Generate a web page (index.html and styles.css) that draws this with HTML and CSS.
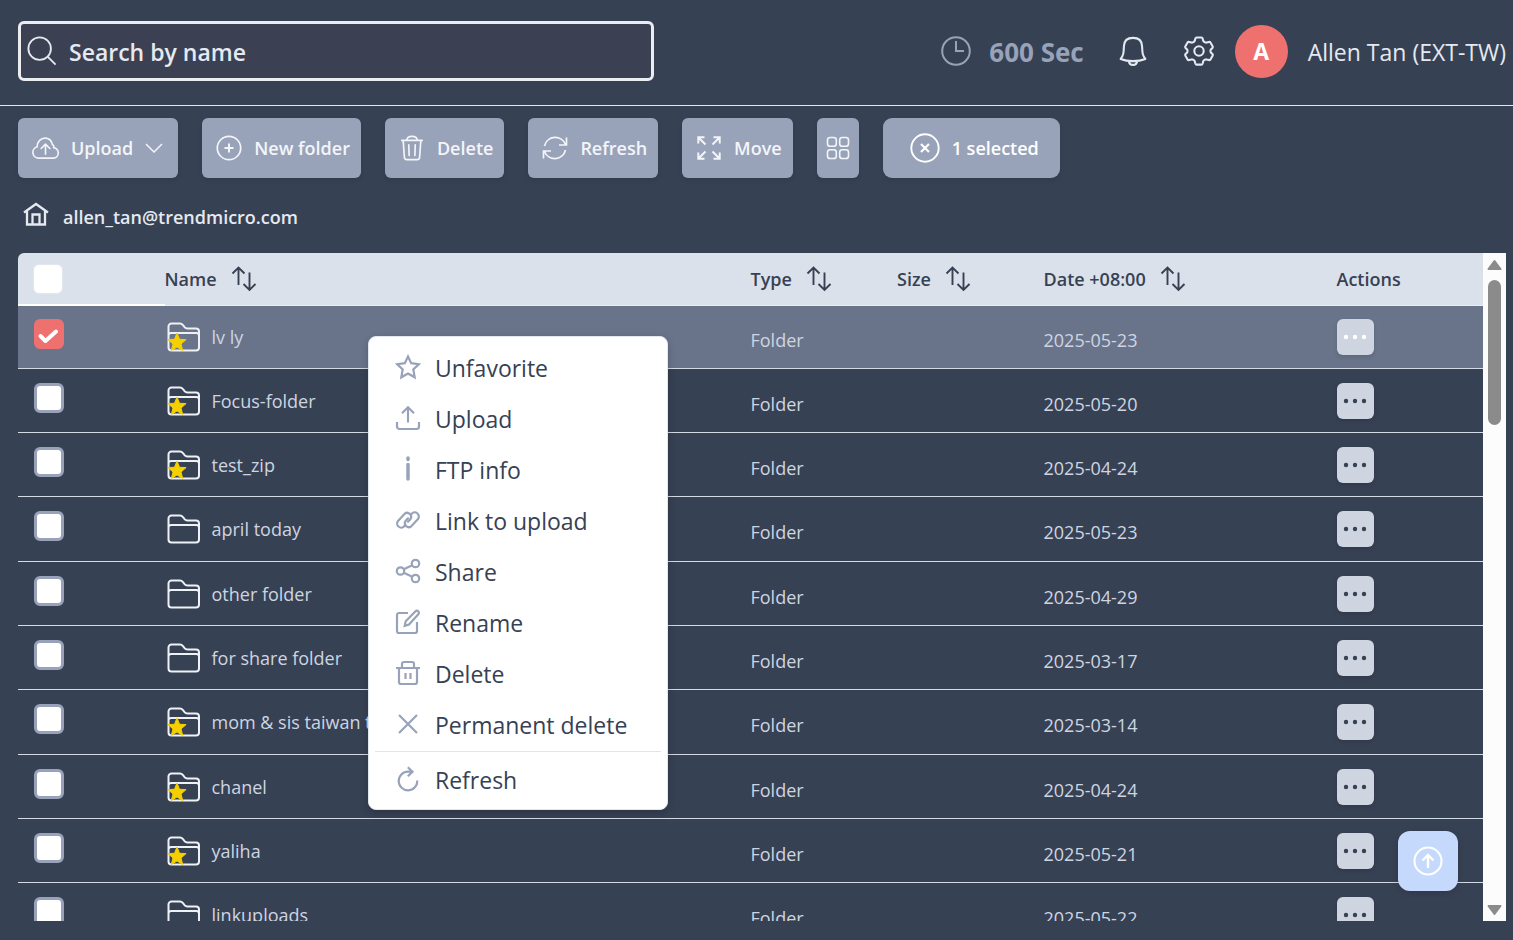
FILE: index.html
```html
<!DOCTYPE html>
<html lang="en">
<head>
<meta charset="utf-8">
<title>Files</title>
<link rel="stylesheet" href="styles.css">
</head>
<body>
<svg class="sprite" aria-hidden="true">
  <symbol id="i-folder" viewBox="0 0 34 30"><path d="M1.5 25.500V4.500a3 3 0 0 1 3-3h8.500c1.500 0 2 .5 3 1.700l1.800 2.200c.8.900 1.300 1.100 2.500 1.100H29a3 3 0 0 1 3 3v16a3 3 0 0 1-3 3H4.500a3 3 0 0 1-3-3zM1.500 13.500a2.500 2.500 0 0 1 2.500-2.500h25.500a2.500 2.500 0 0 1 2.500 2.500" fill="none" stroke="currentColor" stroke-width="2"/></symbol>
  <symbol id="i-star" viewBox="0 0 20 20"><path d="M10 1l2.500 6.300 6.600.3-5.100 4.300 1.700 6.600-5.700-3.600-5.700 3.600L6 11.900.9 7.600l6.600-.3z" fill="#f5cf00" stroke="#f5cf00" stroke-linejoin="round"/></symbol>
  <symbol id="i-sort" viewBox="0 0 26 26"><path d="M7.500 19V2M1.500 7.500l6-6 6 6M18.500 6.500v17M12.500 18l6 6 6-6" fill="none" stroke="currentColor" stroke-width="1.900"/></symbol>
  <symbol id="i-dots" viewBox="0 0 24 6"><g fill="currentColor"><circle cx="3" cy="3" r="2.200"/><circle cx="12" cy="3" r="2.200"/><circle cx="21" cy="3" r="2.200"/></g></symbol>
  <symbol id="i-check" viewBox="0 0 30 30"><path d="M6.500 17l5 5L22 12.500" fill="none" stroke="#fff" stroke-width="4" stroke-linecap="round" stroke-linejoin="round"/></symbol>
</svg>

<header class="topbar">
  <label class="search">
    <svg class="ic-search" viewBox="0 0 32 32" fill="none" stroke="currentColor" stroke-width="2"><circle cx="13.500" cy="13.500" r="12"/><path d="M22 22l8.500 8.500"/></svg>
    <input type="search" placeholder="Search by name" aria-label="Search by name">
  </label>
  <div class="account">
    <svg class="ic-clock" viewBox="0 0 30 30" fill="none" stroke="currentColor" stroke-width="2"><circle cx="15" cy="15" r="13.800"/><path d="M15 5v10h8"/></svg>
    <span class="timer">600 Sec</span>
    <button class="plain bell" aria-label="Notifications"><svg viewBox="0 0 30 32" fill="none" stroke="currentColor" stroke-width="2.200" stroke-linejoin="round"><path d="M1.800 24.500C5 20.500 5 18 5.300 11 5.500 5 9.500 2 15 2s9.500 3 9.700 9c.3 7 .3 9.500 3.500 13.500C24 26.200 20 26.800 15 26.800S6 26.200 1.800 24.500zM10.500 26.500c.2 2.700 2 4.300 4.500 4.300s4.300-1.600 4.500-4.300"/></svg></button>
    <button class="plain gear" aria-label="Settings"><svg viewBox="0 0 32 32" fill="none" stroke="currentColor" stroke-width="2.200" stroke-linejoin="round"><path d="M13.500 1.500h5c.9 0 1.200.5 1.400 1.200l.6 2.300c.2.600.5.900 1 1.200l1 .6c.6.300 1 .4 1.600.2l2.400-.7c.8-.2 1.300 0 1.700.7l2.300 4c.4.700.3 1.200-.2 1.800l-1.600 1.600c-.4.500-.5.900-.5 1.600s.1 1.100.5 1.600l1.600 1.600c.5.600.6 1.100.2 1.800l-2.300 4c-.4.700-.9.900-1.700.7l-2.400-.7c-.6-.2-1-.1-1.600.2l-1 .6c-.5.300-.8.600-1 1.200l-.6 2.300c-.2.700-.5 1.200-1.400 1.200h-5c-.9 0-1.200-.5-1.400-1.200l-.6-2.300c-.2-.6-.5-.9-1-1.200l-1-.6c-.6-.3-1-.4-1.600-.2l-2.400.7c-.8.200-1.300 0-1.700-.7l-2.300-4c-.4-.7-.3-1.200.2-1.800l1.600-1.600c.4-.5.500-.9.500-1.600s-.1-1.100-.5-1.600l-1.600-1.600c-.5-.6-.6-1.100-.2-1.800l2.300-4c.4-.7.9-.9 1.700-.7l2.400.7c.6.200 1 .1 1.600-.2l1-.6c.5-.3.800-.6 1-1.200l.6-2.300c.2-.7.500-1.200 1.400-1.200z"/><circle cx="16" cy="16" r="5"/></svg></button>
    <span class="avatar">A</span>
    <span class="user">Allen Tan (EXT-TW)</span>
  </div>
</header>

<main class="page">
  <div class="toolbar">
    <button class="tool upload"><svg class="ic27" viewBox="0 0 28 24" fill="none" stroke="currentColor" stroke-width="1.700" stroke-linecap="round" stroke-linejoin="round"><path d="M7 22.500a6 6 0 0 1-1.600-11.800C5.200 5.500 9 1.800 13.500 1.800c4 0 6.800 2.500 7.700 6.700 1.400.4 1.700 2.200 1.200 3.200 3 .5 4.800 2.800 4.800 5.400 0 3-2.200 5.400-5.200 5.400zM14 18.500V8.500M9.500 12.500L14 8l4.500 4.500"/></svg>Upload<svg class="chev" viewBox="0 0 18 10" fill="none" stroke="currentColor" stroke-width="1.500"><path d="M1 1l8 8 8-8"/></svg></button>
    <button class="tool"><svg class="ic26" viewBox="0 0 26 26" fill="none" stroke="currentColor" stroke-width="1.700"><circle cx="13" cy="13" r="11.700"/><path d="M13 8.500v9M8.500 13h9" stroke-width="2"/></svg>New folder</button>
    <button class="tool"><svg class="ic26" viewBox="0 0 26 28" fill="none" stroke="currentColor" stroke-width="1.800" stroke-linecap="round" stroke-linejoin="round"><path d="M2 5.800h22M7.500 5.500c0-2.500 1.500-4 5.500-4s5.500 1.500 5.500 4M3.500 6l1.300 18c.2 1.700 1 2.500 2.700 2.500h11c1.700 0 2.500-.8 2.700-2.500L22.500 6M9.500 10.500l.4 11.500M16.500 10.500l-.4 11.500"/></svg>Delete</button>
    <button class="tool"><svg class="ic26" viewBox="0 0 26 26" fill="none" stroke="currentColor" stroke-width="1.700"><path d="M2.500 11A11 11 0 0 1 23.500 9.500M24.500 2.500v7.500H17M23.500 15A11 11 0 0 1 2.500 16.500M1.500 23.500V16H9"/></svg>Refresh</button>
    <button class="tool"><svg class="ic26" viewBox="0 0 26 26" fill="none" stroke="currentColor" stroke-width="2"><path d="M9.500 9.500L2.500 2.500M2.300 8.500V2.300h6.200M16.500 9.500l7-7M17.500 2.300h6.200v6.200M9.500 16.500l-7 7M2.300 17.500v6.200h6.200M16.500 16.500l7 7M17.500 23.700h6.200v-6.200"/></svg>Move</button>
    <button class="tool grid-view" aria-label="Grid view"><svg class="ic24" viewBox="0 0 24 24" fill="none" stroke="currentColor" stroke-width="1.600"><rect x="1.500" y="1.500" width="8.800" height="8.800" rx="2.600"/><rect x="13.700" y="1.500" width="8.800" height="8.800" rx="2.600"/><rect x="1.500" y="13.700" width="8.800" height="8.800" rx="2.600"/><rect x="13.700" y="13.700" width="8.800" height="8.800" rx="2.600"/></svg></button>
    <button class="tool selected"><svg class="ic30" viewBox="0 0 30 30" fill="none" stroke="currentColor" stroke-width="1.900"><circle cx="15" cy="15" r="13.700"/><path d="M11 11l8 8M19 11l-8 8" stroke-width="2.200"/></svg>1 selected</button>
  </div>

  <nav class="crumbs" aria-label="Breadcrumb">
    <svg class="home" viewBox="0 0 26 24" fill="none" stroke="currentColor" stroke-width="2.300"><path d="M1 10.500L13 2l12 8.500M4 9v13.500h18V9M9.500 22.500V12.500h7v10"/></svg>
    <a href="#">allen_tan@trendmicro.com</a>
  </nav>

  <section class="listing">
    <div class="viewport">
      <table class="files">
        <colgroup><col class="c1"><col class="c4"><col class="c1"><col class="c1"><col class="c2"><col class="c1"></colgroup>
        <thead><tr>
          <th><label class="tick head"><input type="checkbox" aria-label="Select all"></label></th>
          <th><span class="col">Name<svg class="sort"><use href="#i-sort"/></svg></span></th>
          <th><span class="col">Type<svg class="sort"><use href="#i-sort"/></svg></span></th>
          <th><span class="col">Size<svg class="sort"><use href="#i-sort"/></svg></span></th>
          <th><span class="col">Date +08:00<svg class="sort"><use href="#i-sort"/></svg></span></th>
          <th><span class="col">Actions</span></th>
        </tr></thead>
        <tbody>
          <tr class="on"><td><label class="tick"><input type="checkbox" checked aria-label="Select lv ly"><svg><use href="#i-check"/></svg></label></td><td><span class="name"><span class="pic"><svg class="folder"><use href="#i-folder"/></svg><svg class="fav"><use href="#i-star"/></svg></span>lv ly</span></td><td class="meta">Folder</td><td></td><td class="meta">2025-05-23</td><td><button class="more" aria-label="Actions"><svg><use href="#i-dots"/></svg></button></td></tr>
          <tr><td><label class="tick"><input type="checkbox" aria-label="Select Focus-folder"></label></td><td><span class="name"><span class="pic"><svg class="folder"><use href="#i-folder"/></svg><svg class="fav"><use href="#i-star"/></svg></span>Focus-folder</span></td><td class="meta">Folder</td><td></td><td class="meta">2025-05-20</td><td><button class="more" aria-label="Actions"><svg><use href="#i-dots"/></svg></button></td></tr>
          <tr><td><label class="tick"><input type="checkbox" aria-label="Select test_zip"></label></td><td><span class="name"><span class="pic"><svg class="folder"><use href="#i-folder"/></svg><svg class="fav"><use href="#i-star"/></svg></span>test_zip</span></td><td class="meta">Folder</td><td></td><td class="meta">2025-04-24</td><td><button class="more" aria-label="Actions"><svg><use href="#i-dots"/></svg></button></td></tr>
          <tr><td><label class="tick"><input type="checkbox" aria-label="Select april today"></label></td><td><span class="name"><span class="pic"><svg class="folder"><use href="#i-folder"/></svg></span>april today</span></td><td class="meta">Folder</td><td></td><td class="meta">2025-05-23</td><td><button class="more" aria-label="Actions"><svg><use href="#i-dots"/></svg></button></td></tr>
          <tr><td><label class="tick"><input type="checkbox" aria-label="Select other folder"></label></td><td><span class="name"><span class="pic"><svg class="folder"><use href="#i-folder"/></svg></span>other folder</span></td><td class="meta">Folder</td><td></td><td class="meta">2025-04-29</td><td><button class="more" aria-label="Actions"><svg><use href="#i-dots"/></svg></button></td></tr>
          <tr><td><label class="tick"><input type="checkbox" aria-label="Select for share folder"></label></td><td><span class="name"><span class="pic"><svg class="folder"><use href="#i-folder"/></svg></span>for share folder</span></td><td class="meta">Folder</td><td></td><td class="meta">2025-03-17</td><td><button class="more" aria-label="Actions"><svg><use href="#i-dots"/></svg></button></td></tr>
          <tr><td><label class="tick"><input type="checkbox" aria-label="Select mom &amp; sis taiwan t"></label></td><td><span class="name"><span class="pic"><svg class="folder"><use href="#i-folder"/></svg><svg class="fav"><use href="#i-star"/></svg></span>mom &amp; sis taiwan t</span></td><td class="meta">Folder</td><td></td><td class="meta">2025-03-14</td><td><button class="more" aria-label="Actions"><svg><use href="#i-dots"/></svg></button></td></tr>
          <tr><td><label class="tick"><input type="checkbox" aria-label="Select chanel"></label></td><td><span class="name"><span class="pic"><svg class="folder"><use href="#i-folder"/></svg><svg class="fav"><use href="#i-star"/></svg></span>chanel</span></td><td class="meta">Folder</td><td></td><td class="meta">2025-04-24</td><td><button class="more" aria-label="Actions"><svg><use href="#i-dots"/></svg></button></td></tr>
          <tr><td><label class="tick"><input type="checkbox" aria-label="Select yaliha"></label></td><td><span class="name"><span class="pic"><svg class="folder"><use href="#i-folder"/></svg><svg class="fav"><use href="#i-star"/></svg></span>yaliha</span></td><td class="meta">Folder</td><td></td><td class="meta">2025-05-21</td><td><button class="more" aria-label="Actions"><svg><use href="#i-dots"/></svg></button></td></tr>
          <tr><td><label class="tick"><input type="checkbox" aria-label="Select linkuploads"></label></td><td><span class="name"><span class="pic"><svg class="folder"><use href="#i-folder"/></svg></span>linkuploads</span></td><td class="meta">Folder</td><td></td><td class="meta">2025-05-22</td><td><button class="more" aria-label="Actions"><svg><use href="#i-dots"/></svg></button></td></tr>
        </tbody>
      </table>
    </div>
    <div class="scrollbar" aria-hidden="true">
      <svg class="arrow" viewBox="0 0 15 11"><path d="M7.500 1.500L13.500 9.500h-12z" fill="#8b8b8b" stroke="#8b8b8b" stroke-width="2" stroke-linejoin="round"/></svg>
      <div class="thumb"></div>
      <svg class="arrow" viewBox="0 0 15 11"><path d="M7.500 9.500L1.500 1.500h12z" fill="#8b8b8b" stroke="#8b8b8b" stroke-width="2" stroke-linejoin="round"/></svg>
    </div>
  </section>
</main>

<div class="menu" role="menu">
  <button class="item" role="menuitem"><svg viewBox="0 0 24 24"><path d="M12 1.500l3.200 6.700 7.600 1-5.500 5.200 1.400 7.900-6.700-3.700-6.700 3.700 1.400-7.900L1.200 9.200l7.600-1z"/></svg>Unfavorite</button>
  <button class="item" role="menuitem"><svg viewBox="0 0 24 24"><path d="M12 16.500V1.500M6 7.200l6-6 6 6M1 16v4.500A2.500 2.500 0 0 0 3.500 23h17a2.500 2.500 0 0 0 2.500-2.500V16"/></svg>Upload</button>
  <button class="item" role="menuitem"><svg viewBox="0 0 24 24"><path d="M12 1v1.500M12 7.500V22" stroke-width="3.500" stroke-linecap="round"/></svg>FTP info</button>
  <button class="item" role="menuitem"><svg viewBox="0 0 24 24"><path d="M8.500 18A4 4 0 0 1 2 13L8.700 5.700A4 4 0 0 1 14.300 11.300L12 13.700M15.500 6A4 4 0 0 1 22 11L15.300 18.300A4 4 0 0 1 9.700 12.700L12 10.300" stroke-linecap="round"/></svg>Link to upload</button>
  <button class="item" role="menuitem"><svg viewBox="0 0 24 24"><circle cx="4.500" cy="12" r="3.700"/><circle cx="19.500" cy="4.500" r="3.700"/><circle cx="19.500" cy="19.500" r="3.700"/><path d="M7.800 10.300l8.400-4.100M7.800 13.700l8.400 4.100"/></svg>Share</button>
  <button class="item" role="menuitem"><svg viewBox="0 0 24 24"><path d="M12 3H3a2 2 0 0 0-2 2v16a2 2 0 0 0 2 2h16a2 2 0 0 0 2-2v-9M19.300 1.400a1.900 1.900 0 0 1 3 2.900L13 14.500 8.700 15.800l1-4.500z"/></svg>Rename</button>
  <button class="item" role="menuitem"><svg viewBox="0 0 24 24"><path d="M0 7h24M3 7v14a2 2 0 0 0 2 2h14a2 2 0 0 0 2-2V7M6 7V3a2 2 0 0 1 2-2h8a2 2 0 0 1 2 2v4M9.500 12v6M14.500 12v6"/></svg>Delete</button>
  <button class="item" role="menuitem"><svg viewBox="0 0 24 24"><path d="M3 3l18 18M21 3L3 21"/></svg>Permanent delete</button>
  <hr>
  <button class="item" role="menuitem"><svg viewBox="0 0 24 24"><path d="M15.500 4.700H12A9.300 9.300 0 1 0 21.300 13.500M11.800.3l4.700 4.400-4.700 4.600"/></svg>Refresh</button>
</div>

<button class="to-top" aria-label="Back to top"><svg viewBox="0 0 30 30" fill="none" stroke="currentColor" stroke-width="2"><circle cx="15" cy="15" r="13.500"/><path d="M15 22V9.500M9.500 14.500L15 9l5.500 5.500" stroke-width="2.400"/></svg></button>
</body>
</html>
```
FILE: styles.css
```css
* { box-sizing: border-box; }
body {
  margin: 0;
  height: 100vh;
  display: flex;
  flex-direction: column;
  overflow: hidden;
  background: #374154;
  color: #e5e9f0;
  font-family: "Segoe UI", "Open Sans", sans-serif;
  font-size: 18px;
}
button, input { font: inherit; color: inherit; }
button { border: 0; padding: 0; cursor: pointer; }
svg { display: block; flex: none; }
.sprite { position: absolute; width: 0; height: 0; }

.topbar {
  display: flex;
  justify-content: space-between;
  align-items: center;
  flex: none;
  height: 106px;
  padding: 0 7px 3px 18px;
  border-bottom: 1px solid #e2e6ec;
}
.search {
  display: flex;
  align-items: center;
  gap: 12px;
  width: 42.75%;
  height: 60px;
  padding: 0 6px;
  border: 3px solid #ebedf0;
  border-radius: 6px;
  background: #3b4053;
}
.ic-search { width: 30px; height: 30px; }
.search input {
  flex: 1;
  min-width: 0;
  padding: 2px 0 0;
  border: 0;
  outline: 0;
  background: none;
  font-size: 23px;
  font-weight: 600;
}
.search input::placeholder { color: #e5e9f0; opacity: 1; }
.account { display: flex; align-items: center; font-size: 23px; }
.ic-clock { width: 30px; height: 30px; color: #98a3b9; }
.timer { margin: 0 34px 0 18px; padding-top: 2px; color: #98a3b9; font-size: 26px; font-weight: 700; }
.user { padding-top: 2px; }
.plain { background: none; }
.bell svg { width: 30px; height: 30px; }
.gear { margin: 0 21px 0 36px; }
.gear svg { width: 30px; height: 30px; }
.avatar {
  display: grid;
  place-items: center;
  width: 53px;
  height: 53px;
  margin-right: 20px;
  border-radius: 50%;
  background: #ee7170;
  color: #fff;
  font-weight: 700;
}

.page {
  flex: 1;
  min-height: 0;
  display: flex;
  flex-direction: column;
  padding: 12px 7px 19px 18px;
}
.toolbar { display: flex; gap: 24px; }
.tool {
  display: flex;
  align-items: center;
  gap: 12px;
  height: 60px;
  padding: 0 11px 0 14px;
  border-radius: 6px;
  background: #98a3b9;
  color: #f3f5f9;
  font-weight: 600;
  box-shadow: 0 2px 4px rgba(0, 0, 0, .1);
}
.ic24 { width: 24px; height: 24px; }
.ic26 { width: 26px; height: 26px; }
.ic27 { width: 27px; height: 24px; }
.ic30 { width: 30px; height: 30px; }
.chev { width: 18px; height: 10px; }
.upload { padding: 0 15px 0 14px; }
.grid-view { padding: 0 9px; }
.selected { padding: 0 21px 0 27px; border-radius: 9px; color: #fff; }

.crumbs { display: flex; align-items: center; gap: 14px; height: 75px; padding: 0 6px 0 5px; font-weight: 600; }
.crumbs a { padding-top: 2px; color: inherit; text-decoration: none; }
.home { width: 26px; height: 24px; margin-bottom: 4px; }

.listing { flex: 1; min-height: 0; display: flex; }
.viewport { flex: 1; min-width: 0; overflow: hidden; border-top-left-radius: 6px; }
.files { width: 100%; table-layout: fixed; border-collapse: separate; border-spacing: 0; }
.c1 { width: 10%; }
.c2 { width: 20%; }
.c4 { width: 40%; }
th, td { padding: 0; text-align: left; vertical-align: middle; }
th {
  height: 53px;
  background: #dbe1eb;
  color: #374154;
  font-weight: 600;
  border-bottom: 1px solid #e8ecf3;
}
th:first-child { border-bottom: 2px solid #fff; }
.col { display: flex; align-items: center; gap: 14px; }
.sort { width: 26px; height: 26px; }
td { height: 64px; border-bottom: 1px solid #d3dae5; color: #ced5e0; }
tr:nth-child(3n+1) td { height: 65px; }
.on:first-child td { height: 63px; background: #69748b; }
.tick { display: grid; width: 30px; height: 30px; margin: 0 0 6px 16px; }
.tick > * { grid-area: 1 / 1; width: 30px; height: 30px; }
.tick input {
  appearance: none;
  margin: 0;
  border: 3px solid #98a3b9;
  border-radius: 6px;
  background: #fff;
}
.tick input:checked { background: #ee7170; border-color: #ee7170; }
.tick svg { z-index: 1; pointer-events: none; }
.head { margin: 0 0 0 15px; }
.head input { border: 1px solid #e2e7ef; }
.name { display: flex; align-items: center; gap: 11px; }
.pic { position: relative; width: 34px; margin-left: 2px; }
.folder { width: 34px; height: 30px; color: #eef1f6; }
.fav { position: absolute; left: 0; bottom: 0; width: 20px; height: 20px; }
.meta { padding-top: 6px; }
.more {
  display: grid;
  place-items: center;
  width: 37px;
  height: 36px;
  border-radius: 6px;
  background: #ced5e0;
  color: #374154;
  box-shadow: 0 2px 4px rgba(0, 0, 0, .12);
}
.more svg { width: 24px; height: 6px; }
.on .more { color: #fff; }

.scrollbar {
  display: flex;
  flex-direction: column;
  align-items: center;
  width: 23px;
  padding: 6px 0 5px;
  background: #fcfcfc;
}
.arrow { width: 15px; height: 12px; }
.thumb { width: 13px; height: 145px; margin: 9px 0 auto; border-radius: 7px; background: #8b8b8b; }

.menu {
  position: absolute;
  left: 368px;
  top: 336px;
  width: 300px;
  padding: 6px 6px 3px;
  border: 1px solid #e2e6ef;
  border-radius: 8px;
  background: #fff;
  color: #374154;
  box-shadow: 0 3px 8px rgba(0, 0, 0, .2);
}
.item {
  display: flex;
  align-items: center;
  gap: 15px;
  width: 100%;
  height: 51px;
  padding: 0 21px 2px;
  background: none;
  font-size: 23px;
}
.item svg { width: 24px; height: 24px; margin-bottom: 1px; fill: none; stroke: #98a3b9; stroke-width: 2.2; overflow: visible; }
.menu hr { margin: 0 0 3px; border: 0; border-top: 1px solid #e2e4ee; }

.to-top {
  position: absolute;
  right: 55px;
  bottom: 49px;
  display: grid;
  place-items: center;
  width: 60px;
  height: 60px;
  border-radius: 12px;
  background: #c5d9fd;
  color: #fff;
  box-shadow: 0 2px 6px rgba(0, 0, 0, .15);
}
.to-top svg { width: 30px; height: 30px; }
```
